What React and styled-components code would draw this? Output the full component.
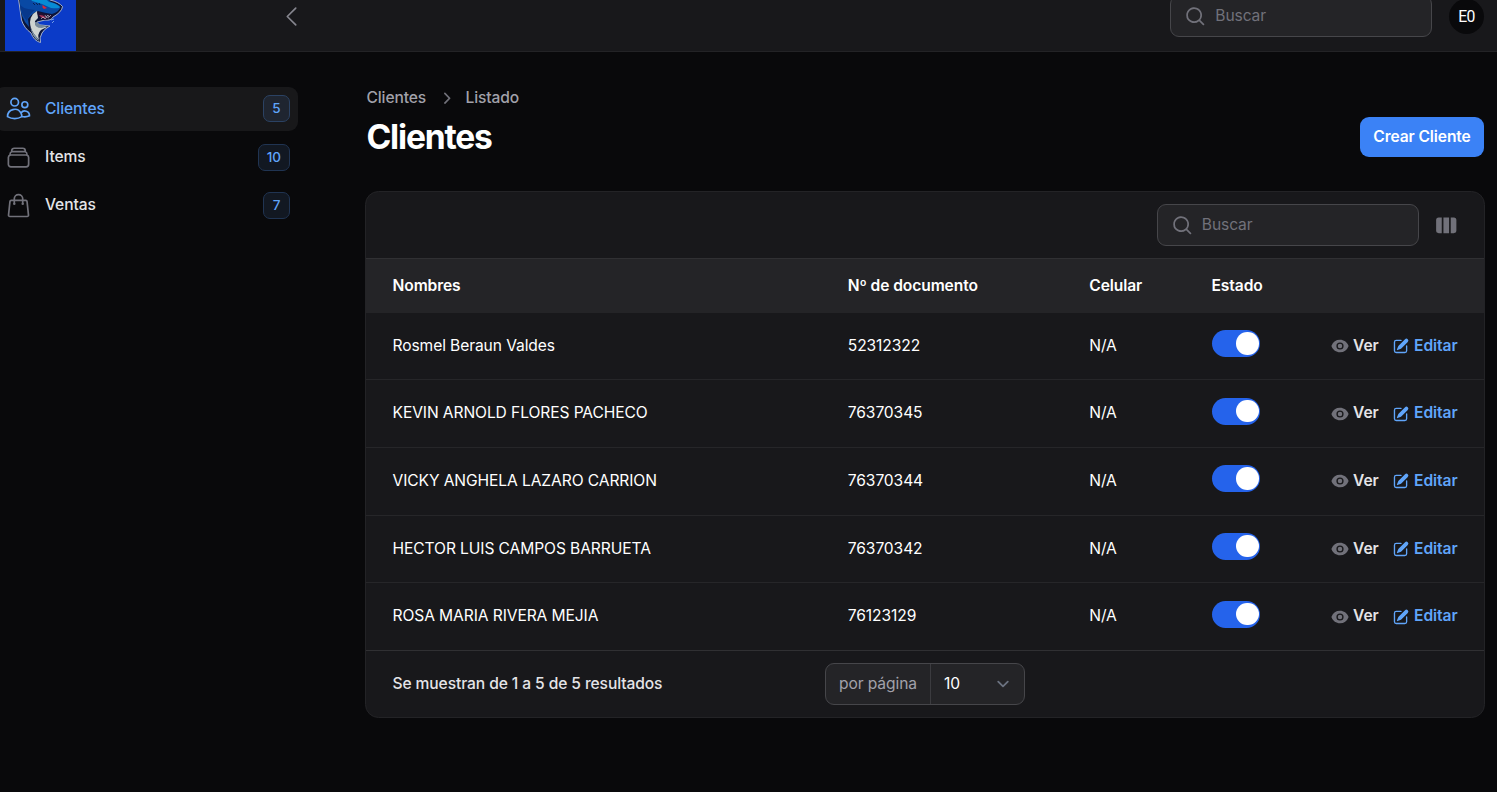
import React from "react";
import styled, { createGlobalStyle } from "styled-components";
import {
  HiOutlineUsers,
  HiOutlineRectangleStack,
  HiOutlineShoppingBag,
  HiOutlineChevronLeft,
  HiMiniMagnifyingGlass,
  HiMiniChevronRight,
  HiMiniViewColumns,
  HiMiniEye,
  HiMiniPencilSquare,
} from "react-icons/hi2";

const Global = createGlobalStyle`
  * { box-sizing: border-box; }
  body {
    margin: 0;
    background: #09090b;
    color: #fff;
    font: 400 15.6px/22.5px Inter, sans-serif;
    letter-spacing: -0.1px;
    overflow: hidden;
  }
  svg { display: block; flex-shrink: 0; }
`;

const Page = styled.div`
  height: 792px;
  overflow: hidden;
`;

const Topbar = styled.header`
  display: flex;
  align-items: center;
  height: 72px;
  margin-top: -20px;
  padding: 1px 13px 0 5px;
  background: #18181b;
  border-bottom: 1px solid #232326;
`;

const Logo = styled.svg`
  width: 71px;
  height: 71px;
  margin: 0 202px 1px 0;
`;

const Collapse = styled.div`
  display: flex;
  color: #85858e;
  font-size: 27px;
`;

const Search = styled.label`
  display: flex;
  align-items: center;
  gap: 8.8px;
  width: 262px;
  height: 42px;
  margin-left: auto;
  padding: 0 13px;
  border: 1px solid #46464a;
  border-radius: 9px;
  background: #242427;
  color: #71717a;
  svg { font-size: 22.5px; }
`;

const Avatar = styled.div`
  display: grid;
  place-items: center;
  width: 35px;
  height: 35px;
  margin-left: 17px;
  padding-top: 1px;
  border-radius: 50%;
  background: #09090b;
  font: 400 15.75px/1 Roboto, sans-serif;
  letter-spacing: -0.6px;
`;

const Body = styled.div`
  display: flex;
`;

const Sidebar = styled.nav`
  display: flex;
  flex-direction: column;
  gap: 4px;
  width: 303px;
  flex-shrink: 0;
  margin-left: -5px;
  padding: 35px 0 0;
`;

const NavItem = styled.div`
  display: flex;
  align-items: center;
  gap: 13.4px;
  width: 303px;
  height: 44px;
  padding: 0 8px 0 10px;
  border-radius: 9px;
  background: ${(p) => (p.$active ? "#18181a" : "transparent")};
  color: ${(p) => (p.$active ? "#60a5fa" : "#e4e4e7")};
  font-weight: 500;
  > svg {
    margin-left: -0.4px;
    margin-bottom: ${(p) => (p.$active ? "1px" : "0")};
    font-size: 27px;
    color: ${(p) => (p.$active ? "#60a5fa" : "#71717a")};
  }
`;

const Count = styled.span`
  display: grid;
  place-items: center;
  align-content: start;
  min-width: 27px;
  height: 27px;
  margin-left: auto;
  margin-bottom: ${(p) => (p.$active ? "1px" : "0")};
  padding: 0 8px;
  border: 1px solid ${(p) => (p.$active ? "#2b4263" : "#203452")};
  border-radius: 7px;
  background: ${(p) => (p.$active ? "#1f2530" : "#121822")};
  color: #60a5fa;
  font-size: 13.5px;
  line-height: 24px;
  letter-spacing: 0;
`;

const Main = styled.main`
  flex: 1;
  padding: 35px 12px 0 67px;
`;

const Heading = styled.div`
  display: flex;
  align-items: center;
  justify-content: space-between;
  margin-bottom: 34px;
  padding-left: 1.4px;
`;

const Crumbs = styled.div`
  display: flex;
  align-items: center;
  gap: 8.4px;
  height: 22px;
  margin-bottom: 7px;
  color: #a1a1aa;
  font-weight: 500;
  svg { font-size: 22.5px; color: #71717a; }
`;

const Title = styled.h1`
  margin: 0;
  font-size: 33.6px;
  line-height: 41px;
  font-weight: 700;
  letter-spacing: -0.035em;
`;

const Create = styled.button`
  width: 124px;
  height: 40px;
  margin: 30px 1px 0 0;
  padding: 0 0 1px;
  border: 0;
  border-radius: 9px;
  background: #3b82f6;
  color: #fff;
  font: 600 15.6px Inter, sans-serif;
  letter-spacing: -0.1px;
  white-space: nowrap;
`;

const Card = styled.section`
  width: 1120px;
  height: 527px;
  border: 1px solid #232326;
  border-radius: 13.5px;
  background: #18181b;
  overflow: hidden;
`;

const Toolbar = styled.div`
  display: flex;
  align-items: center;
  height: 66px;
  padding-right: 27px;
  > svg { margin-left: 16px; color: #71717a; font-size: 22.5px; }
`;

const Row = styled.div`
  display: grid;
  grid-template-columns: 455.3px 241.5px 122.2px 1fr auto;
  align-items: center;
  height: ${(p) => (p.$head ? "55px" : p.$first ? "66.45px" : "67.6px")};
  padding: 0 26.5px;
  border-top: ${(p) => (p.$first ? "0" : `1px solid ${p.$head ? "#303033" : "#262629"}`)};
  background: ${(p) => (p.$head ? "#242427" : "transparent")};
  font-weight: ${(p) => (p.$head ? 600 : 400)};
`;

const Switch = styled.div`
  width: 48px;
  height: 27px;
  margin: -5px 0 0 0.6px;
  padding: 2px;
  border-radius: 14px;
  background: #2563eb;
  &::after {
    content: "";
    display: block;
    width: 22.5px;
    height: 22.5px;
    margin-left: 22px;
    border-radius: 50%;
    background: #fff;
  }
`;

const Actions = styled.div`
  display: flex;
  gap: 13px;
`;

const Action = styled.span`
  display: flex;
  align-items: center;
  gap: 4.5px;
  color: ${(p) => (p.$edit ? "#60a5fa" : "#e4e4e7")};
  font-weight: 600;
  svg { font-size: 18px; color: ${(p) => (p.$edit ? "#60a5fa" : "#71717a")}; }
`;

const Footer = styled.footer`
  display: grid;
  grid-template-columns: 432.5px auto 1fr;
  align-items: center;
  height: 67px;
  padding-left: 26.5px;
  border-top: 1px solid #303033;
  color: #e4e4e7;
  font-weight: 500;
`;

const PerPage = styled.div`
  display: flex;
  width: 200px;
  height: 42px;
  border: 1px solid #46464a;
  border-radius: 9px;
  background: #242427;
  line-height: 40px;
  font-weight: 400;
`;

const PerLabel = styled.span`
  width: 105px;
  padding-left: 13px;
  border-right: 1px solid #3b3b3f;
  color: #a1a1aa;
`;

const PerValue = styled.span`
  display: flex;
  flex: 1;
  align-items: center;
  justify-content: space-between;
  padding: 0 9px 0 13px;
  color: #fff;
`;

const clients = [
  ["Rosmel Beraun Valdes", "52312322"],
  ["KEVIN ARNOLD FLORES PACHECO", "76370345"],
  ["VICKY ANGHELA LAZARO CARRION", "76370344"],
  ["HECTOR LUIS CAMPOS BARRUETA", "76370342"],
  ["ROSA MARIA RIVERA MEJIA", "76123129"],
];

const SharkLogo = () => (
  <Logo viewBox="0 -20 71 71">
    <rect y="-20" width="71" height="71" fill="#0b3bc8" />
    <path
      d="M13.5 -1L20 -8Q36 -7 45 0Q54 2 57.5 6.5Q57 12 48 17Q46 21 40 20L32 22Q31 25 36 25L45 26Q39 29 37 33Q34 38 35.5 42.5Q29 41 26 33Q19 28 16.5 20Z"
      fill="#0b153a" stroke="#b4bed0" strokeWidth="0.9" strokeLinejoin="round"
    />
    <path d="M15 -1L22 -5Q39 -5 46 2Q53 4 55.5 7Q54 12 47 14Q40 13 33 11Q27 13 23 19L24 27Q14 17 15 -1Z" fill="#0949a4" />
    <path d="M24 -4Q39 -4 44 2Q51 3 55 7Q54 9 46 8L37 4L27 1Z" fill="#078bd4" />
    <path d="M15 5Q18 8 23 9L30 10Q24 14 22 21Q17 16 15 5Z" fill="#07388c" />
    <path d="M32 11L28 14Q25 18 25 22Q25 28 29 34L34 40Q32 34 36 30L42 27L35 27Q29 26 30 21L33 18Z" fill="#cdd3d1" />
    <path d="M25 25Q26 31 33 39L34 41Q27 38 25 25Z" fill="#8197a8" />
    <path d="M30 22Q34 22 35 25L43 26L37 28Q29 28 30 22Z" fill="#75899c" />
    <path d="M32 12Q39 14 48 15Q46 19 39 20Q33 18 32 12Z" fill="#22102f" />
    <path d="M34 15Q39 15 41 18L37 18Z" fill="#a73659" />
    <path d="M40 15L41 17L43 15L44 17L46 15M36 19L38 17L40 19L42 17L44 18" fill="none" stroke="#ced7df" strokeWidth="0.6" />
    <path d="M37.5 5L42 8L39 9L37.5 7.5Z" fill="#dc2636" />
    <path d="M28 3L30 5M31 3L33 5M34 3L35 5" stroke="#06214f" strokeWidth="1" />
    <path d="M46 20L49 19M47 23L49 21" stroke="#8eb5ec" strokeWidth="0.8" />
  </Logo>
);

const SearchField = () => (
  <Search>
    <HiMiniMagnifyingGlass />
    <span>Buscar</span>
  </Search>
);

export default function App() {
  return (
    <Page>
      <Global />
      <Topbar>
        <SharkLogo />
        <Collapse><HiOutlineChevronLeft /></Collapse>
        <SearchField />
        <Avatar>E0</Avatar>
      </Topbar>
      <Body>
        <Sidebar>
          <NavItem $active><HiOutlineUsers />Clientes<Count $active>5</Count></NavItem>
          <NavItem><HiOutlineRectangleStack />Items<Count>10</Count></NavItem>
          <NavItem><HiOutlineShoppingBag />Ventas<Count>7</Count></NavItem>
        </Sidebar>
        <Main>
          <Heading>
            <div>
              <Crumbs><span>Clientes</span><HiMiniChevronRight /><span>Listado</span></Crumbs>
              <Title>Clientes</Title>
            </div>
            <Create>Crear Cliente</Create>
          </Heading>
          <Card>
            <Toolbar><SearchField /><HiMiniViewColumns /></Toolbar>
            <Row $head>
              <span>Nombres</span><span>Nº de documento</span><span>Celular</span><span>Estado</span>
            </Row>
            {clients.map(([name, doc], i) => (
              <Row key={doc} $first={i === 0}>
                <span>{name}</span>
                <span>{doc}</span>
                <span>N/A</span>
                <Switch />
                <Actions>
                  <Action><HiMiniEye />Ver</Action>
                  <Action $edit><HiMiniPencilSquare />Editar</Action>
                </Actions>
              </Row>
            ))}
            <Footer>
              <span>Se muestran de 1 a 5 de 5 resultados</span>
              <PerPage>
                <PerLabel>por página</PerLabel>
                <PerValue>
                  10
                  <svg width="24" height="24" viewBox="0 0 20 20" fill="none" stroke="#6b7280" strokeWidth="1.5" strokeLinecap="round" strokeLinejoin="round">
                    <path d="M6 8l4 4 4-4" />
                  </svg>
                </PerValue>
              </PerPage>
            </Footer>
          </Card>
        </Main>
      </Body>
    </Page>
  );
}
